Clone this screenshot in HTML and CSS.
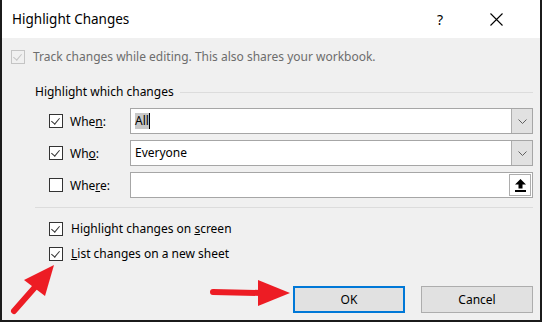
FILE: index.html
```
<!DOCTYPE html>
<html lang="en">
	<head>
		<meta charset="UTF-8">
		<title>Highlight Changes</title>
		<link rel="stylesheet" href="styles.css">
	</head>
	<body>
		<div class="dialog">
			<div class="titlebar">
				<span class="title">Highlight Changes</span>
				<span class="help">?</span>
				<span class="close">
					<svg width="13" height="13" viewBox="0 0 13 13"><path d="M0.5 0.5 L12.5 12.5 M12.5 0.5 L0.5 12.5" stroke="#000" stroke-width="1.1" fill="none"/></svg>
				</span>
			</div>
			<div class="content">
				<div class="check disabled">
					<span class="box on"></span>
					<span>Track changes while editing. This also shares your workbook.</span>
				</div>
				<div class="group">
					<div class="group-head"><span>Highlight which changes</span><i class="line"></i></div>
					<div class="row">
						<span class="box on"></span>
						<span class="label">Whe<u>n</u>:</span>
						<div class="combo">
							<div class="value"><span class="sel">All</span><span class="caret"></span></div>
							<div class="drop"><svg width="9" height="5" viewBox="0 0 9 5"><polyline points="0.5,0.5 4.5,4.5 8.5,0.5" stroke="#606060" stroke-width="1" fill="none"/></svg></div>
						</div>
					</div>
					<div class="row">
						<span class="box on"></span>
						<span class="label">Wh<u>o</u>:</span>
						<div class="combo">
							<div class="value">Everyone</div>
							<div class="drop"><svg width="9" height="5" viewBox="0 0 9 5"><polyline points="0.5,0.5 4.5,4.5 8.5,0.5" stroke="#606060" stroke-width="1" fill="none"/></svg></div>
						</div>
					</div>
					<div class="row">
						<span class="box"></span>
						<span class="label">Whe<u>r</u>e:</span>
						<div class="combo">
							<div class="value"></div>
							<div class="ref">
								<svg width="11" height="13" viewBox="0 0 11 13"><path d="M5.5 0 L11 5.5 L7.5 5.5 L7.5 9.5 L3.5 9.5 L3.5 5.5 L0 5.5 Z" fill="#000"/><rect x="0" y="11" width="11" height="2" fill="#000"/></svg>
							</div>
						</div>
					</div>
					<div class="sep"></div>
					<div class="check opt">
						<span class="box on"></span>
						<span>Highlight changes on <u>s</u>creen</span>
					</div>
					<div class="check opt">
						<span class="box on"></span>
						<span><u>L</u>ist changes on a new sheet</span>
					</div>
				</div>
				<div class="buttons">
					<button type="button" class="default">OK</button>
					<button type="button">Cancel</button>
				</div>
			</div>
			<svg class="arrows" width="542" height="322" viewBox="0 0 542 322">
				<path d="M14 311 L36 286" stroke="#ed1c24" stroke-width="6" stroke-linecap="round" fill="none"/>
				<polygon points="54,265 24,280 45,296" fill="#ed1c24"/>
				<path d="M213 292 L262 293" stroke="#ed1c24" stroke-width="6" stroke-linecap="round" fill="none"/>
				<polygon points="258,280 290,293 258,306" fill="#ed1c24"/>
			</svg>
		</div>
	</body>
</html>
```

FILE: styles.css
```
*{
	margin: 0;
	padding: 0;
	box-sizing: border-box;
}
body{
	font-family: "Noto Sans", "Open Sans", sans-serif;
	font-size: 12px;
	color: #000;
	background: #fff;
}
.dialog{
	position: relative;
	width: 542px;
	height: 322px;
	border: 2px solid #1b1b1b;
	border-top: none;
	background: #f0f0f0;
	display: flex;
	flex-direction: column;
}
.titlebar{
	height: 38px;
	background: #fff;
	display: flex;
	align-items: center;
	padding-left: 10px;
}
.title{
	flex: 1;
	font-size: 13.5px;
}
.help{
	font-size: 14px;
	width: 53px;
}
.close{
	width: 50px;
	display: flex;
	padding-top: 1px;
}
.content{
	padding: 12px 7px 0 9px;
	display: flex;
	flex-direction: column;
}
.check{
	display: flex;
	align-items: center;
	gap: 8px;
	height: 14px;
	line-height: 16px;
}
.disabled{
	color: #6d6d6d;
}
.box{
	width: 14px;
	height: 14px;
	border: 1px solid #333;
	background: #fff;
	position: relative;
	flex: none;
}
.box.on::after{
	content: "";
	position: absolute;
	left: 3px;
	top: 1px;
	width: 4px;
	height: 7px;
	border: solid #333;
	border-width: 0 1px 1px 0;
	transform: rotate(40deg);
}
.disabled .box{
	border-color: #c4c4c4;
	background: #f0f0f0;
}
.disabled .box.on::after{
	border-color: #c4c4c4;
}
.group{
	margin-left: 24px;
	margin-top: 20px;
	display: flex;
	flex-direction: column;
}
.group-head{
	display: flex;
	align-items: center;
	height: 16px;
	line-height: 16px;
	gap: 6px;
	margin-bottom: 8px;
}
.line{
	flex: 1;
	height: 1px;
	background: #dcdcdc;
}
.row{
	display: flex;
	align-items: center;
	height: 26px;
	margin-bottom: 6px;
	padding-left: 14px;
}
.label{
	width: 67px;
	padding-left: 7px;
}
.combo{
	flex: 1;
	height: 26px;
	border: 1px solid #a6a6a6;
	background: #fff;
	display: flex;
}
.value{
	flex: 1;
	padding-left: 4px;
	line-height: 24px;
	display: flex;
	align-items: center;
}
.sel{
	background: #c8c8c8;
	line-height: 16px;
}
.caret{
	width: 1px;
	height: 16px;
	background: #000;
}
.drop{
	width: 21px;
	background: #e1e1e1;
	border-left: 1px solid #adadad;
	display: flex;
	align-items: center;
	justify-content: center;
}
.ref{
	width: 22px;
	margin: 1px;
	border: 1px solid #adadad;
	background: #fff;
	display: flex;
	align-items: center;
	justify-content: center;
}
.sep{
	height: 1px;
	background: #dcdcdc;
	margin-top: 3px;
	margin-bottom: 14px;
}
.opt{
	margin-left: 14px;
	margin-bottom: 11px;
}
.buttons{
	display: flex;
	justify-content: flex-end;
	gap: 16px;
	margin-top: 14px;
}
button{
	width: 112px;
	height: 27px;
	font-family: inherit;
	font-size: 12px;
	color: #000;
	background: #e1e1e1;
	border: 1px solid #adadad;
}
button.default{
	border: 2px solid #0078d7;
}
.arrows{
	position: absolute;
	left: -2px;
	top: 0;
	pointer-events: none;
}
```
